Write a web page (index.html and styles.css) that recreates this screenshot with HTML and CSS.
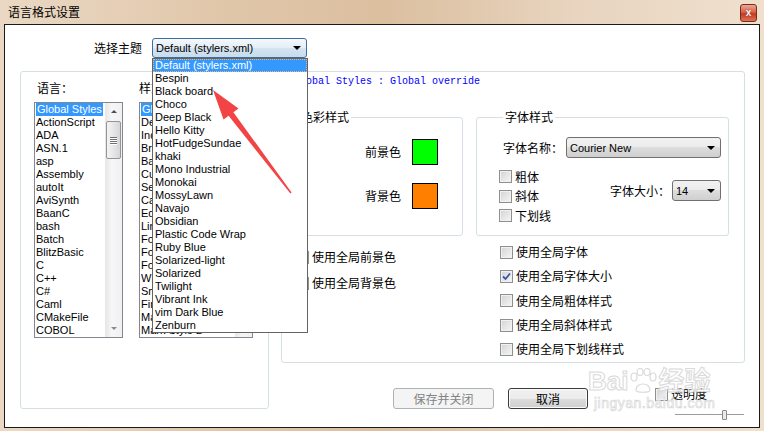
FILE: index.html
```html
<!DOCTYPE html>
<html lang="zh-CN">
<head>
    <meta charset="UTF-8">
    <meta name="viewport" content="width=device-width, initial-scale=1.0">
    <title>语言格式设置</title>
    <link rel="stylesheet" href="styles.css">
</head>
<body>
    <div class="window">
        <div class="titlebar">
            <span class="title">语言格式设置</span>
            <span class="close">x</span>
        </div>
        <div class="client">
            <!-- theme chooser, with its list dropped open -->
            <div class="theme-row">
                <span class="label">选择主题</span>
                <div class="combo theme-combo">
                    <span>Default (stylers.xml)</span>
                    <span class="arrow"></span>
                    <ul class="drop-list">
                        <li class="selected">Default (stylers.xml)</li>
                        <li>Bespin</li>
                        <li>Black board</li>
                        <li>Choco</li>
                        <li>Deep Black</li>
                        <li>Hello Kitty</li>
                        <li>HotFudgeSundae</li>
                        <li>khaki</li>
                        <li>Mono Industrial</li>
                        <li>Monokai</li>
                        <li>MossyLawn</li>
                        <li>Navajo</li>
                        <li>Obsidian</li>
                        <li>Plastic Code Wrap</li>
                        <li>Ruby Blue</li>
                        <li>Solarized-light</li>
                        <li>Solarized</li>
                        <li>Twilight</li>
                        <li>Vibrant Ink</li>
                        <li>vim Dark Blue</li>
                        <li>Zenburn</li>
                    </ul>
                </div>
            </div>

            <div class="main">
                <div class="lists-box">
                    <span class="label lang-label">语言：</span>
                    <span class="label">样式：</span>
                    <div class="listbox">
                        <ul>
                            <li><span class="selected">Global Styles</span></li>
                            <li>ActionScript</li>
                            <li>ADA</li>
                            <li>ASN.1</li>
                            <li>asp</li>
                            <li>Assembly</li>
                            <li>autoIt</li>
                            <li>AviSynth</li>
                            <li>BaanC</li>
                            <li>bash</li>
                            <li>Batch</li>
                            <li>BlitzBasic</li>
                            <li>C</li>
                            <li>C++</li>
                            <li>C#</li>
                            <li>Caml</li>
                            <li>CMakeFile</li>
                            <li>COBOL</li>
                        </ul>
                        <div class="vscroll">
                            <span class="sb-btn"><span class="up"></span></span>
                            <div class="sb-track">
                                <span class="sb-thumb"><i></i><i></i><i></i><i></i></span>
                            </div>
                            <span class="sb-btn"><span class="down"></span></span>
                        </div>
                    </div>
                    <div class="listbox">
                        <ul>
                            <li><span class="selected">Global override</span></li>
                            <li>Default Style</li>
                            <li>Indent guideline style</li>
                            <li>Brace highlight style</li>
                            <li>Bad brace colour</li>
                            <li>Current line background colour</li>
                            <li>Selected text colour</li>
                            <li>Caret colour</li>
                            <li>Edge colour</li>
                            <li>Line number margin</li>
                            <li>Fold</li>
                            <li>Fold margin</li>
                            <li>Fold active</li>
                            <li>White space symbol</li>
                            <li>Smart HighLighting</li>
                            <li>Find Mark Style</li>
                            <li>Mark Style 1</li>
                            <li>Mark Style 2</li>
                        </ul>
                        <div class="vscroll">
                            <span class="sb-btn"><span class="up"></span></span>
                            <div class="sb-track"></div>
                            <span class="sb-btn"><span class="down"></span></span>
                        </div>
                    </div>
                </div>

                <div class="right-col">
                    <div class="style-panel">
                        <div class="style-name">Global Styles : Global override</div>
                        <div class="groups">
                            <fieldset class="group color-group">
                                <legend>色彩样式</legend>
                                <div class="color-rows">
                                    <span>前景色</span><span class="swatch fg"></span>
                                    <span>背景色</span><span class="swatch bg"></span>
                                </div>
                            </fieldset>
                            <fieldset class="group font-group">
                                <legend>字体样式</legend>
                                <div class="font-name-row">
                                    <span>字体名称：</span>
                                    <div class="combo gray-combo font-combo">
                                        <span>Courier New</span>
                                        <span class="arrow"></span>
                                    </div>
                                </div>
                                <div class="font-opts">
                                    <div class="checks">
                                        <label class="check"><span class="box"></span>粗体</label>
                                        <label class="check"><span class="box"></span>斜体</label>
                                        <label class="check"><span class="box"></span>下划线</label>
                                    </div>
                                    <div class="size-row">
                                        <span>字体大小：</span>
                                        <div class="combo gray-combo size-combo">
                                            <span>14</span>
                                            <span class="arrow"></span>
                                        </div>
                                    </div>
                                </div>
                            </fieldset>
                        </div>
                        <div class="globals">
                            <div class="global-col color-globals">
                                <label class="check"><span class="box"></span>使用全局前景色</label>
                                <label class="check"><span class="box"></span>使用全局背景色</label>
                            </div>
                            <div class="global-col font-globals">
                                <label class="check"><span class="box"></span>使用全局字体</label>
                                <label class="check"><span class="box checked"><svg width="11" height="11" viewBox="0 0 11 11"><path d="M2 5.5 L4.5 8 L9 2.5" fill="none" stroke="#3b55a8" stroke-width="1.8"/></svg></span>使用全局字体大小</label>
                                <label class="check"><span class="box"></span>使用全局粗体样式</label>
                                <label class="check"><span class="box"></span>使用全局斜体样式</label>
                                <label class="check"><span class="box"></span>使用全局下划线样式</label>
                            </div>
                        </div>
                    </div>

                    <div class="actions">
                        <button class="btn btn-save" disabled>保存并关闭</button>
                        <button class="btn btn-cancel">取消</button>
                        <div class="transparency">
                            <label class="check"><span class="box"></span>透明度</label>
                            <div class="slider">
                                <span class="track"></span>
                                <span class="thumb"></span>
                                <span class="track rest"></span>
                            </div>
                        </div>
                    </div>
                </div>
            </div>
        </div>
    </div>

    <!-- baidu jingyan watermark -->
    <div class="watermark">
        <div class="wm-logo">Bai<svg width="30" height="26" viewBox="0 0 30 26"><g fill="none" stroke="#d6d6d6" stroke-width="1.2"><ellipse cx="6" cy="9" rx="3" ry="4"/><ellipse cx="12" cy="4" rx="3" ry="3.5"/><ellipse cx="19" cy="4" rx="3" ry="3.5"/><ellipse cx="25" cy="9" rx="3" ry="4"/><path d="M8 22 C8 14 22 14 22 22 C22 25 8 25 8 22 Z"/></g></svg>经验</div>
        <div class="wm-url">jingyan.baidu.com</div>
    </div>

    <!-- red pointer arrow drawn over the screenshot -->
    <svg class="pointer" width="764" height="431" viewBox="0 0 764 431">
        <polygon points="213,90 238.5,108.5 233.4,112.2 291.6,192.5 290.4,193.5 228.6,115.8 223.5,119.5" fill="#f24444"/>
    </svg>
</body>
</html>
```

FILE: styles.css
```css
/* Global */
* {
    box-sizing: border-box;
}

body {
    margin: 0;
    width: 764px;
    height: 431px;
    overflow: hidden;
    position: relative;
    font-family: "Liberation Sans", "Noto Sans CJK SC", sans-serif;
    font-size: 11px;
    color: #000;
    background: #e4cdb4;
}

ul {
    list-style: none;
    margin: 0;
    padding: 0;
}

/* Window frame */
.window {
    width: 764px;
    height: 431px;
    padding: 0 4px 3px 4px;
    display: flex;
    flex-direction: column;
    background: linear-gradient(90deg, #ead8c4 0%, #e0c6a9 30%, #dbbf9f 50%, #e8d4bf 75%, #efe0ce 100%);
}

.titlebar {
    height: 24px;
    display: flex;
    align-items: center;
    justify-content: space-between;
    padding-left: 4px;
}

.title {
    font-family: "Noto Sans CJK SC", sans-serif;
    font-size: 12px;
    line-height: 14px;
}

.close {
    width: 17px;
    height: 18px;
    margin-right: 3px;
    margin-top: 1px;
    border: 1px solid #7c2a1a;
    border-radius: 3px;
    background: linear-gradient(#eba896, #d6614a 45%, #c4391f 55%, #dc7459);
    color: #fff;
    font-weight: bold;
    font-size: 10px;
    line-height: 15px;
    text-align: center;
    text-shadow: 0 0 1px #5a1a0c;
}

.client {
    flex: 1;
    background: #fff;
    border: 1px solid #1a1a1a;
    position: relative;
}

.label {
    font-family: "Noto Sans CJK SC", sans-serif;
    font-size: 12px;
    line-height: 14px;
}

/* Theme chooser */
.theme-row {
    margin-top: 13px;
    height: 20px;
    padding-left: 89px;
    display: flex;
    align-items: center;
    gap: 10px;
}

.combo {
    display: flex;
    align-items: center;
    padding-left: 3px;
    border-radius: 3px;
    font-size: 11px;
    white-space: nowrap;
}

.combo .arrow {
    margin-left: auto;
    margin-right: 5px;
    width: 0;
    height: 0;
    border-left: 4px solid transparent;
    border-right: 4px solid transparent;
    border-top: 4px solid #000;
}

.theme-combo {
    position: relative;
    z-index: 5;
    width: 155px;
    height: 20px;
    border: 1px solid #3c6f99;
    background: linear-gradient(#f3f8fc, #e4eef6 50%, #d4e4f0 50%, #c8dcec);
}

.drop-list {
    position: absolute;
    top: 19px;
    left: -1px;
    width: 156px;
    border: 1px solid #646464;
    background: #fff;
}

.drop-list li {
    height: 13px;
    line-height: 13px;
    padding-left: 2px;
}

.drop-list li.selected {
    background: #3399ff;
    color: #fff;
    outline: 1px dotted #f0b27a;
    outline-offset: -1px;
}

/* Main area */
.main {
    margin-top: 13px;
    padding-left: 15px;
    display: flex;
    align-items: flex-start;
    gap: 12px;
}

.lists-box {
    width: 249px;
    height: 338px;
    border: 1px solid #d5dfe5;
    border-radius: 3px;
    padding: 9px 0 0 13px;
    display: grid;
    grid-template-columns: 89px 114px;
    grid-template-rows: 14px 236px;
    column-gap: 16px;
    row-gap: 7px;
}

.lang-label {
    padding-left: 3px;
}

.listbox {
    border: 1px solid #828790;
    background: #fff;
    display: flex;
    overflow: hidden;
}

.listbox ul {
    flex: 1;
    min-width: 0;
    padding-left: 1px;
}

.listbox li {
    height: 13px;
    line-height: 13px;
    white-space: nowrap;
    overflow: hidden;
}

.listbox li .selected {
    display: inline-block;
    padding: 0 1px;
    background: #3399ff;
    color: #fff;
}

/* Scrollbars */
.vscroll {
    width: 17px;
    flex: none;
    display: flex;
    flex-direction: column;
    background: linear-gradient(90deg, #e6e6e6, #f6f6f6 40%, #f0f0f0);
}

.sb-btn {
    height: 17px;
    display: flex;
    align-items: center;
    justify-content: center;
}

.sb-btn .up,
.sb-btn .down {
    width: 0;
    height: 0;
    border-left: 3px solid transparent;
    border-right: 3px solid transparent;
}

.sb-btn .up {
    border-bottom: 3px solid #4d4d4d;
}

.sb-btn .down {
    border-top: 3px solid #8a8a8a;
}

.sb-track {
    flex: 1;
    padding: 1px 1px 0 1px;
}

.sb-thumb {
    height: 38px;
    display: flex;
    flex-direction: column;
    align-items: center;
    justify-content: center;
    gap: 1px;
    border: 1px solid #959595;
    border-radius: 2px;
    background: linear-gradient(90deg, #f4f4f4, #e6e6e6 50%, #d6d6d6);
}

.sb-thumb i {
    width: 7px;
    height: 1px;
    background: #6f6f6f;
    box-shadow: 0 1px 0 #fff;
}

/* Style panel */
.right-col {
    display: flex;
    flex-direction: column;
}

.style-panel {
    width: 464px;
    height: 292px;
    border: 1px solid #d5dfe5;
    border-radius: 3px;
    padding: 3px 0 0 12px;
}

.style-name {
    font-family: "Liberation Mono", monospace;
    font-size: 10px;
    line-height: 13px;
    color: #0000ff;
    white-space: pre;
}

.groups {
    margin-top: 21px;
    display: flex;
    gap: 13px;
}

.group {
    margin: 0;
    padding: 0;
    height: 127px;
    min-width: 0;
    border: 1px solid #d5dfe5;
    border-radius: 3px;
    font-family: "Noto Sans CJK SC", sans-serif;
    font-size: 12px;
}

.group legend {
    margin-left: 4px;
    padding: 0 2px;
    line-height: 16px;
}

.color-group {
    width: 169px;
}

.color-rows {
    padding: 14px 24px 0 0;
    display: grid;
    grid-template-columns: auto 26px;
    justify-content: end;
    align-items: center;
    column-gap: 11px;
    row-gap: 18px;
    line-height: 16px;
}

.swatch {
    width: 26px;
    height: 26px;
    border: 1px solid #000;
}

.swatch.fg {
    background: #00ff00;
}

.swatch.bg {
    background: #ff8000;
}

.font-group {
    width: 253px;
    padding: 0 7px 0 22px;
}

.font-name-row {
    margin-top: 12px;
    display: flex;
    justify-content: flex-end;
    align-items: center;
    gap: 3px;
    line-height: 16px;
}

.gray-combo {
    height: 21px;
    border: 1px solid #707070;
    background: linear-gradient(#f2f2f2, #ebebeb 50%, #dddddd 50%, #cfcfcf);
    font-family: "Liberation Sans", sans-serif;
}

.font-combo {
    width: 155px;
}

.size-combo {
    width: 49px;
}

.font-opts {
    margin-top: 9px;
    display: flex;
    align-items: flex-start;
    justify-content: space-between;
}

.checks .check {
    height: 19.5px;
}

.size-row {
    margin-top: 13px;
    display: flex;
    align-items: center;
    gap: 2px;
    line-height: 16px;
}

/* Checkboxes */
.check {
    display: flex;
    align-items: center;
    gap: 3px;
    font-family: "Noto Sans CJK SC", sans-serif;
    font-size: 12px;
    line-height: 16px;
    white-space: nowrap;
}

.box {
    width: 13px;
    height: 13px;
    flex: none;
    display: flex;
    align-items: center;
    justify-content: center;
    border: 1px solid #8e8f8f;
    background: linear-gradient(135deg, #d3d3d3, #f6f6f6);
    box-shadow: inset 0 0 0 1px #f1f1f1;
}

/* Use-global options */
.globals {
    display: grid;
    grid-template-columns: 206px auto;
}

.color-globals {
    margin-top: 8px;
    padding-left: 2px;
}

.color-globals .check {
    height: 26px;
}

.font-globals {
    margin-top: 4px;
}

.font-globals .check {
    height: 24.3px;
}

/* Buttons row */
.actions {
    margin-top: 25px;
    padding-left: 112px;
    display: flex;
    align-items: flex-start;
}

.btn {
    height: 21px;
    padding: 0;
    border-radius: 3px;
    font-family: "Noto Sans CJK SC", sans-serif;
    font-size: 12px;
    line-height: 16px;
}

.btn-save {
    width: 101px;
    border: 1px solid #adb2b5;
    background: #f4f4f4;
    color: #838383;
}

.btn-cancel {
    width: 80px;
    margin-left: 14px;
    border: 1px solid #3c3c3c;
    background: linear-gradient(#f2f2f2, #ebebeb 50%, #dddddd 50%, #cfcfcf);
    box-shadow: inset 0 0 0 1px #fafafa;
    color: #000;
}

.transparency {
    margin-left: 67px;
    margin-top: -2px;
}

.slider {
    margin: 8px 0 0 20px;
    width: 69px;
    height: 10px;
    display: flex;
    align-items: center;
}

.slider .track {
    width: 47px;
    height: 2px;
    border-top: 1px solid #9c9c9c;
    border-bottom: 1px solid #fff;
}

.slider .track.rest {
    width: auto;
    flex: 1;
}

.slider .thumb {
    width: 5px;
    height: 10px;
    border: 1px solid #8a8a8a;
    border-radius: 1px;
    background: #ececec;
}

/* Overlays */
.watermark {
    position: absolute;
    left: 588px;
    top: 367px;
    color: #fff;
    -webkit-text-stroke: 1px #d6d6d6;
    font-family: "Liberation Sans", "Noto Sans CJK SC", sans-serif;
    pointer-events: none;
    opacity: 0.9;
}

.wm-logo {
    display: flex;
    align-items: center;
    font-size: 26px;
    font-weight: bold;
    line-height: 28px;
}

.wm-url {
    margin-left: 6px;
    font-size: 14px;
    line-height: 16px;
    letter-spacing: 0.5px;
    -webkit-text-stroke: 0.6px #d0d0d0;
}

.pointer {
    position: absolute;
    left: 0;
    top: 0;
    z-index: 10;
    pointer-events: none;
}
```
